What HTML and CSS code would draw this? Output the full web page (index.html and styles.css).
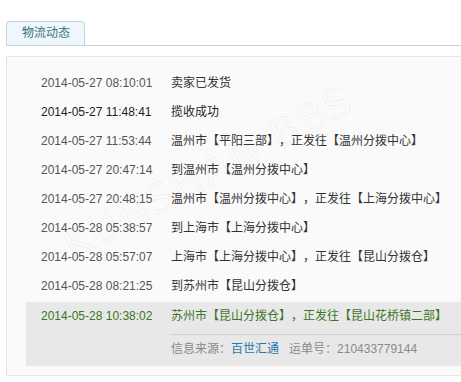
FILE: index.html
```html
<!DOCTYPE html>
<html lang="zh-CN">
<head>
<meta charset="utf-8">
<title>物流动态</title>
<link rel="stylesheet" href="styles.css">
</head>
<body>
<div class="page">
  <div class="tabs">
    <div class="tab">物流动态</div>
  </div>
  <div class="panel">
    <div class="watermark">KUNSHAN BBS</div>
    <ul class="track">
      <li class="row"><span class="time">2014-05-27 08:10:01</span><span class="desc">卖家已发货</span></li>
      <li class="row dark"><span class="time">2014-05-27 11:48:41</span><span class="desc">揽收成功</span></li>
      <li class="row"><span class="time">2014-05-27 11:53:44</span><span class="desc">温州市【平阳三部】，正发往【温州分拨中心】</span></li>
      <li class="row"><span class="time">2014-05-27 20:47:14</span><span class="desc">到温州市【温州分拨中心】</span></li>
      <li class="row"><span class="time">2014-05-27 20:48:15</span><span class="desc">温州市【温州分拨中心】，正发往【上海分拨中心】</span></li>
      <li class="row"><span class="time">2014-05-28 05:38:57</span><span class="desc">到上海市【上海分拨中心】</span></li>
      <li class="row"><span class="time">2014-05-28 05:57:07</span><span class="desc">上海市【上海分拨中心】，正发往【昆山分拨仓】</span></li>
      <li class="row"><span class="time">2014-05-28 08:21:25</span><span class="desc">到苏州市【昆山分拨仓】</span></li>
      <li class="row latest">
        <span class="time">2014-05-28 10:38:02</span>
        <div class="desc-col">
          <span class="desc">苏州市【昆山分拨仓】，正发往【昆山花桥镇二部】</span>
          <div class="source">信息来源：<a class="company">百世汇通</a><span class="waybill">运单号：210433779144</span></div>
        </div>
      </li>
    </ul>
  </div>
</div>
</body>
</html>
```

FILE: styles.css
```css
html, body {
  margin: 0;
  padding: 0;
  background: #fff;
  overflow: hidden;
}

body {
  font-family: "Liberation Sans", "Noto Sans CJK SC", sans-serif;
  font-size: 12px;
  color: #333;
  text-spacing-trim: space-all;
}

.page {
  padding: 21px 0 0 6px;
}

.tabs {
  display: flex;
  height: 24px;
  border-bottom: 1px solid #c6d4da;
}

.tab {
  width: 62px;
  height: 23px;
  padding-left: 15px;
  line-height: 23px;
  font-size: 12px;
  color: #3d6f7c;
  background: #eef7fc;
  border: 1px solid #c6d4da;
  border-bottom: none;
  border-radius: 4px 4px 0 0;
}

.panel {
  position: relative;
  margin-top: 10px;
  height: 318px;
  border: 1px solid #e6e6e6;
  border-right: none;
  background: #fafafa;
  overflow: hidden;
}

.watermark {
  position: absolute;
  left: 70px;
  top: 165px;
  font-family: "DejaVu Sans", sans-serif;
  font-size: 40px;
  letter-spacing: 3px;
  color: transparent;
  -webkit-text-stroke: 1px rgba(0, 0, 0, 0.06);
  transform: rotate(-28deg);
  transform-origin: left bottom;
  white-space: nowrap;
  pointer-events: none;
}

.track {
  position: relative;
  list-style: none;
  margin: 0;
  padding: 12px 0 0 19px;
}

.row {
  display: flex;
  align-items: flex-start;
  padding-left: 15px;
  line-height: 29px;
}

.time {
  width: 130px;
  flex: none;
  color: #555;
}

.desc {
  color: #333;
}

.row.dark .time,
.row.dark .desc {
  color: #1e1e1e;
}

.row.latest {
  margin-top: 1px;
  background: #e8e8e8;
  padding-bottom: 2px;
}

.row.latest .time,
.row.latest .desc {
  color: #3b7526;
}

.desc-col {
  flex: 1;
  display: flex;
  flex-direction: column;
}

.source {
  margin-top: 3px;
  border-top: 1px solid #cfcfcf;
  color: #8a8a8a;
  line-height: 29px;
}

.company {
  color: #2a78a8;
}

.waybill {
  margin-left: 10px;
  color: #8a8a8a;
}
```
